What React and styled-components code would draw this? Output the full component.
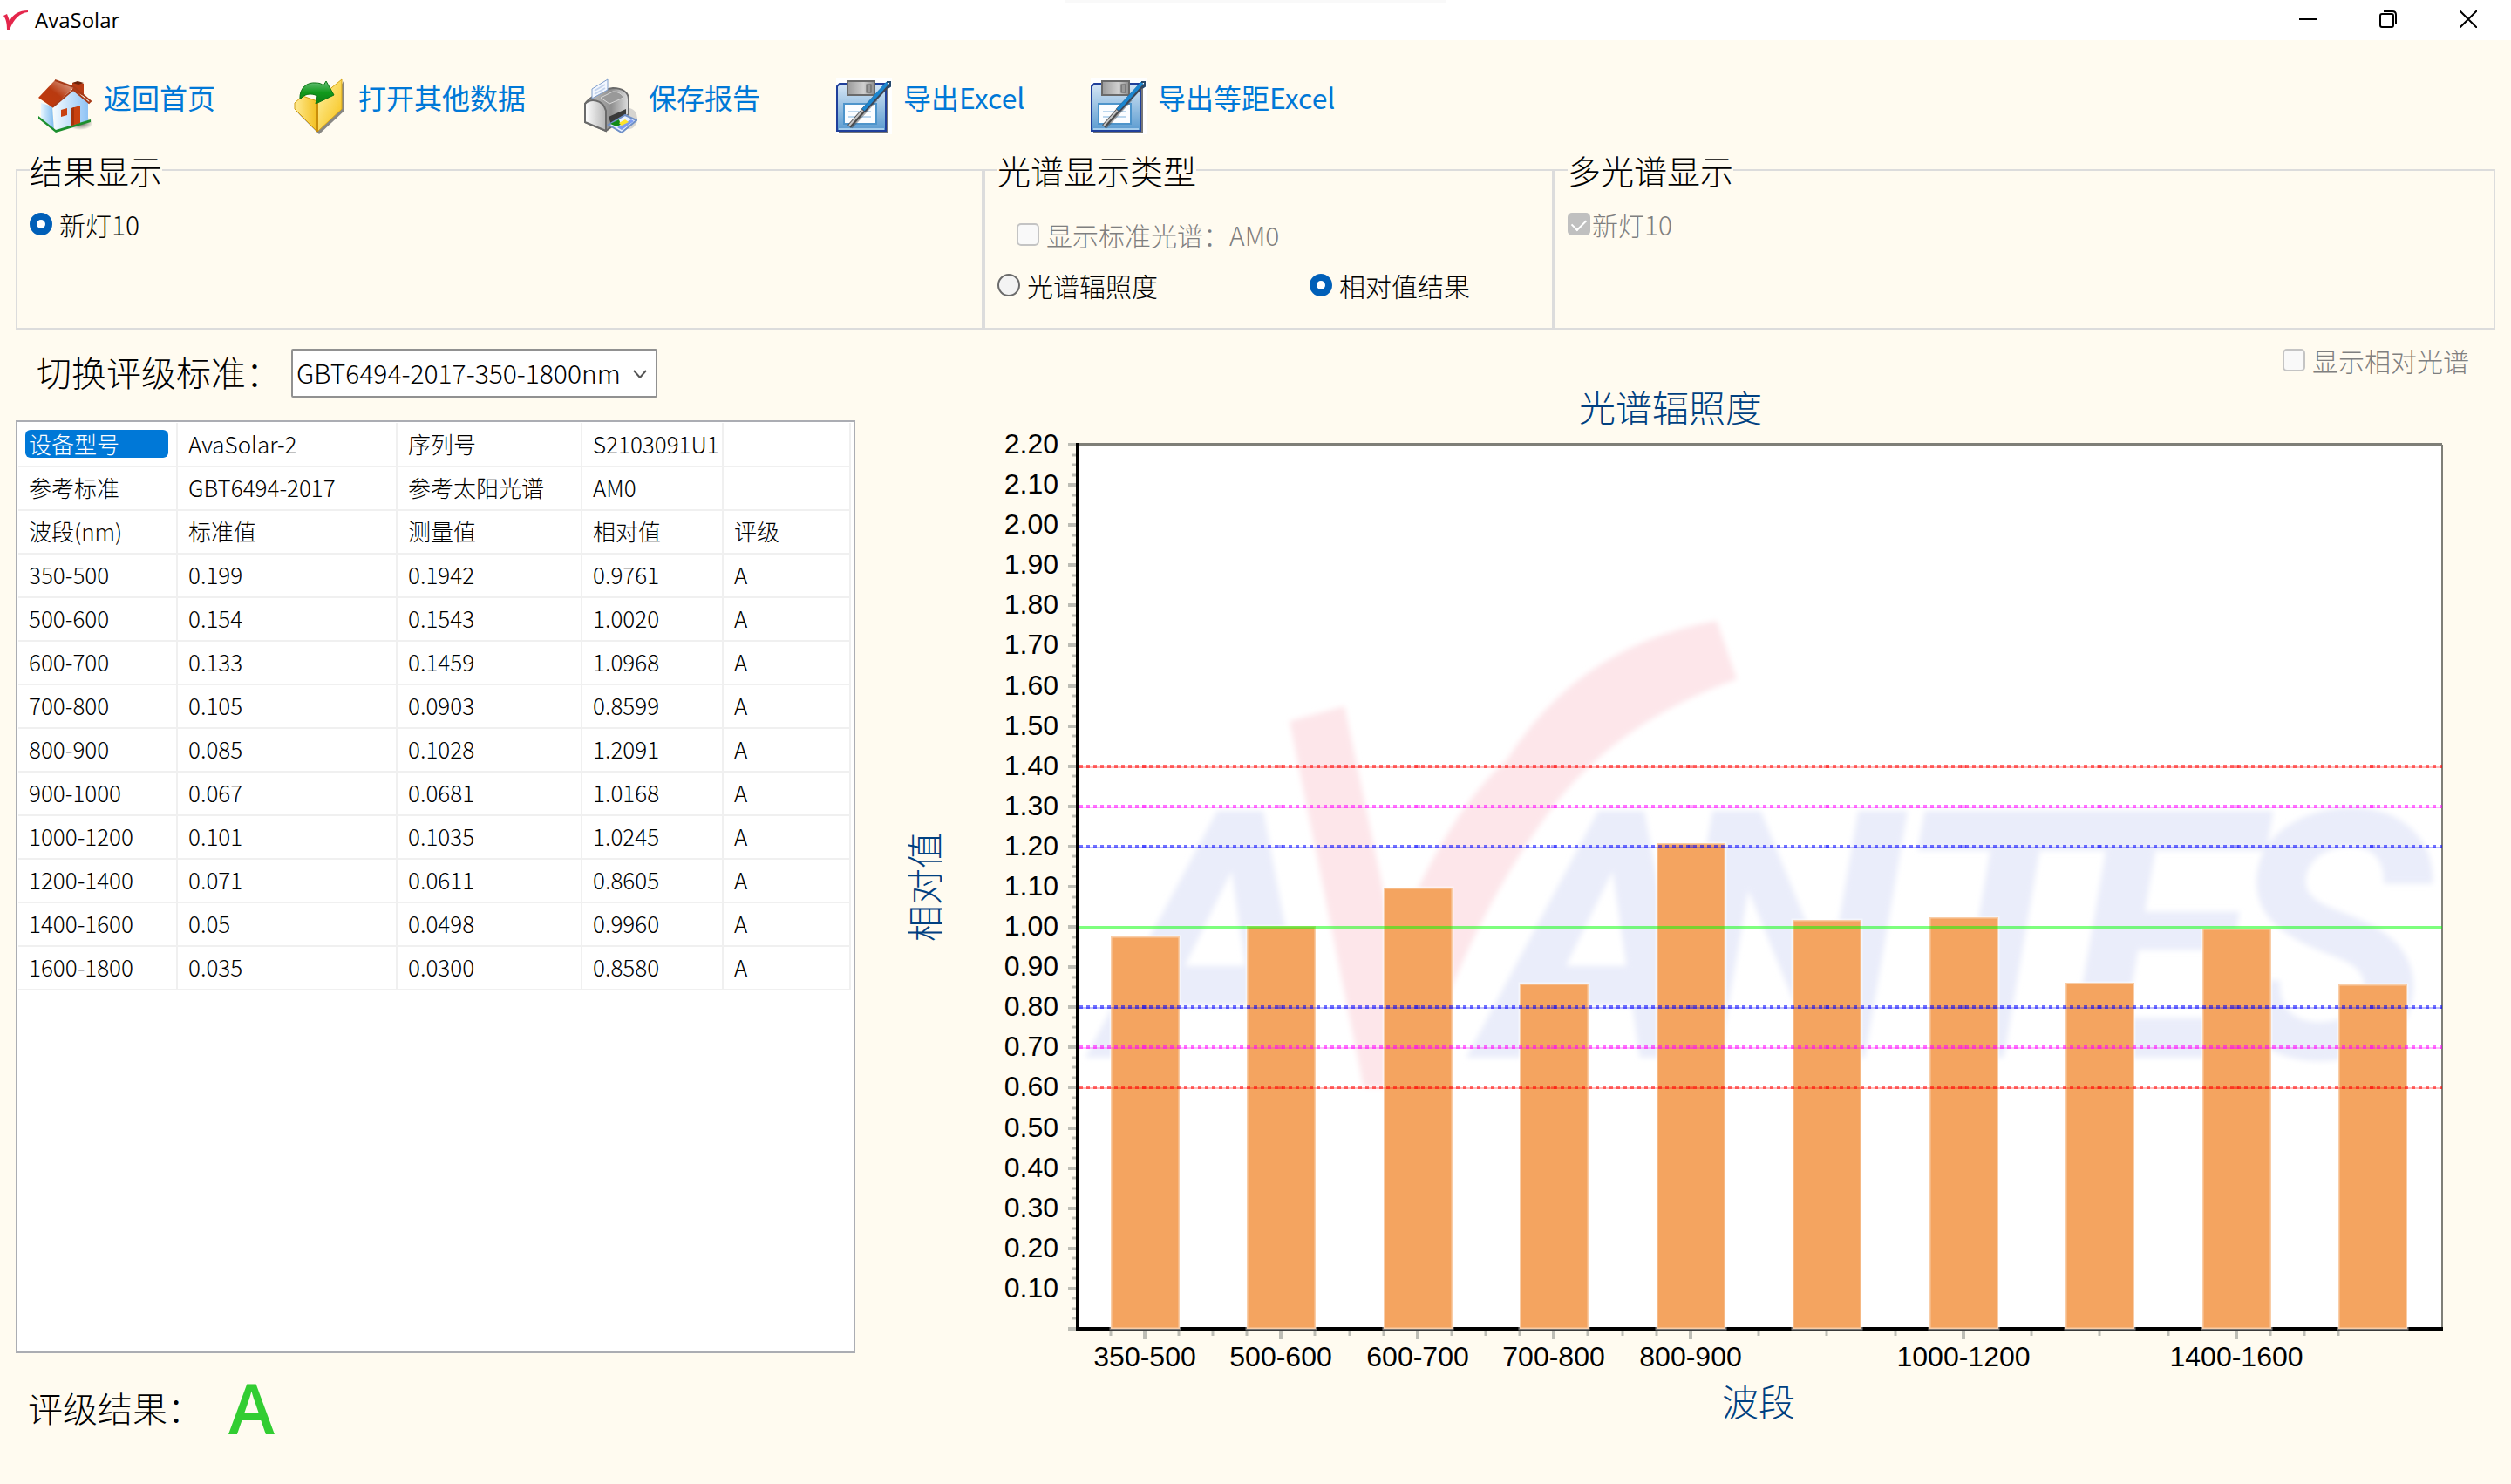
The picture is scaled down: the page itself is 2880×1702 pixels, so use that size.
import React, { useState } from "react";
import styled, { createGlobalStyle } from "styled-components";

const GlobalStyle = createGlobalStyle`
  * {
    box-sizing: border-box;
  }
  body {
    margin: 0;
    background-color: #fffbf0;
    color: #000;
    font-family: "Noto Sans CJK SC", "Open Sans", sans-serif;
    font-weight: 300;
  }
  button,
  select,
  input {
    font: inherit;
    color: inherit;
  }
`;

const Window = styled.div`
  min-height: 100vh;
  display: flex;
  flex-direction: column;
`;

const TitleBar = styled.header`
  display: grid;
  grid-template-columns: 1fr 438px 1fr;
  height: 46px;
  background-color: #fff;
`;

const AppName = styled.h1`
  display: flex;
  align-items: center;
  gap: 8px;
  margin: 0;
  padding-left: 4px;
  font-family: "Open Sans", sans-serif;
  font-size: 24px;
  font-weight: 400;
  line-height: 46px;
`;

const SnapHandle = styled.div`
  height: 4px;
  background-color: #f9f9f9;
`;

const WindowButtons = styled.div`
  display: flex;
  justify-content: flex-end;
  padding-right: 3px;
`;

const WindowButton = styled.button`
  display: flex;
  justify-content: center;
  align-items: center;
  width: 92px;
  height: 44px;
  padding: 0;
  border: none;
  background: none;
`;

const Toolbar = styled.nav`
  display: grid;
  grid-template-columns: 292px 333px 292px 292px auto;
  justify-content: start;
  height: 130px;
  padding: 44px 42px 0;
`;

const ToolButton = styled.button`
  display: flex;
  align-items: flex-start;
  gap: 13px;
  height: 64px;
  padding: 0;
  border: none;
  background: none;
  color: #0078d7;
  font-size: 32px;
  font-weight: 400;
  line-height: 42px;
  white-space: nowrap;
  cursor: pointer;
`;

const Groups = styled.div`
  display: grid;
  grid-template-columns: 1110fr 654fr 1080fr;
  padding: 0 18px;
`;

const Group = styled.fieldset`
  min-width: 0;
  min-height: 202px;
  margin: 0;
  padding: ${({ $top }) => $top}px 14px 0;
  border: 2px solid #dcdcdc;
`;

const Legend = styled.legend`
  padding: 0;
  font-size: 38px;
  line-height: 38px;
`;

const Option = styled.label`
  display: flex;
  align-items: center;
  gap: ${({ $gap }) => $gap || 8}px;
  padding-left: ${({ $indent }) => $indent || 0}px;
  font-size: 30px;
  line-height: 34px;
  white-space: nowrap;
  color: ${({ $muted }) => ($muted ? "#7f7f7f" : "#000")};
`;

const OptionPair = styled.div`
  display: grid;
  grid-template-columns: 358px auto;
  justify-content: start;
  margin-top: 24px;
`;

const Radio = styled.input`
  appearance: none;
  flex: none;
  width: 26px;
  height: 26px;
  margin: 0;
  border: 2px solid #6b6b6b;
  border-radius: 50%;
  background-color: #f3f3f3;
  &:checked {
    border: 8px solid #005fb8;
    background-color: #fff;
  }
`;

const Checkbox = styled.input`
  appearance: none;
  flex: none;
  display: flex;
  justify-content: center;
  width: 26px;
  height: 26px;
  margin: 0;
  border: 2px solid #c4c4c4;
  border-radius: 5px;
  background-color: #f9f9f9;
  &:checked {
    background-color: #c0c0c0;
    border-color: #c0c0c0;
  }
  &:checked::after {
    content: "";
    width: 8px;
    height: 14px;
    margin-top: 2px;
    border: solid #fff;
    border-width: 0 2px 2px 0;
    transform: rotate(45deg);
  }
`;

const Main = styled.main`
  flex: 1;
  display: grid;
  grid-template-columns: 963fr 1881fr;
  padding: 0 18px;
`;

const Column = styled.section`
  display: flex;
  flex-direction: column;
  min-width: 0;
`;

const StandardRow = styled.div`
  display: flex;
  align-items: center;
  height: 104px;
  padding: 0 24px 4px;
`;

const StandardLabel = styled.label`
  padding-bottom: 4px;
  font-size: 40px;
  line-height: 56px;
  white-space: nowrap;
`;

const SelectBox = styled.div`
  display: flex;
  align-items: center;
  width: 420px;
  height: 56px;
  margin-left: 12px;
  border: 2px solid #919191;
  border-radius: 2px;
  background-color: #fff;
`;

const Select = styled.select`
  appearance: none;
  width: 100%;
  height: 100%;
  margin-right: -26px;
  padding: 0 26px 2px 4px;
  border: none;
  background: none;
  font-size: 30px;
`;

const TableBox = styled.div`
  flex: 1;
  padding: 1px;
  border: 2px solid #abadb3;
  background-color: #fff;
`;

const Table = styled.table`
  width: 954px;
  max-width: 100%;
  table-layout: fixed;
  border-collapse: collapse;
`;

const Cell = styled.td`
  height: 50px;
  padding: 0 0 2px 12px;
  border: solid #f0f0f0;
  border-width: 0 2px 2px 0;
  font-size: 26px;
  line-height: 32px;
  white-space: nowrap;
`;

const Selected = styled.span`
  display: block;
  margin: 0 9px 0 -4px;
  padding-left: 4px;
  border-radius: 6px;
  background-color: #0078d7;
  color: #fff;
`;

const ResultRow = styled.div`
  display: flex;
  align-items: center;
  height: 150px;
  padding: 0 14px 26px;
  font-size: 40px;
`;

const Grade = styled.output`
  margin-left: 30px;
  font-family: "Open Sans", sans-serif;
  font-size: 80px;
  font-weight: 600;
  line-height: 100px;
  color: #32cd32;
`;

const ChartOptions = styled.div`
  display: flex;
  justify-content: flex-end;
  align-items: flex-start;
  height: 46px;
  padding: 18px 30px 0 0;
`;

const ChartSvg = styled.svg`
  display: block;
  width: 100%;
  height: auto;
`;

const ChartTitle = styled.text`
  fill: #004080;
  font-size: 42px;
  text-anchor: middle;
`;

const AxisLabel = styled.text`
  font-family: "Liberation Sans", Arial, sans-serif;
  font-size: 32px;
  font-weight: 400;
  text-anchor: ${({ $anchor }) => $anchor};
`;

const Watermark = styled.text`
  fill: #eaedfa;
  font-family: Roboto, sans-serif;
  font-size: 398px;
  font-style: italic;
  font-weight: 700;
`;

const LogoMark = () => (
  <svg width="28" height="24" viewBox="0 0 28 24" aria-hidden="true">
    <path
      d="M0 7 L4 5 L7 13 C11 5 18 1 28 1 L28 3 C19 4 12 10 7 23 L4 23 C4 16 3 11 0 7 Z"
      fill="#e4264b"
    />
  </svg>
);

const HomeIcon = () => (
  <svg width="64" height="64" viewBox="0 0 64 64" aria-hidden="true">
    <defs>
      <linearGradient id="homeRoof" x1="0" y1="1" x2="1" y2="0">
        <stop offset="0" stopColor="#c23a0c" />
        <stop offset="0.5" stopColor="#b93a10" />
        <stop offset="1" stopColor="#e0b3a0" />
      </linearGradient>
      <linearGradient id="homeSide">
        <stop offset="0" stopColor="#e6f6ff" />
        <stop offset="1" stopColor="#7fbbee" />
      </linearGradient>
      <linearGradient id="homeFront">
        <stop offset="0" stopColor="#f4fbff" />
        <stop offset="1" stopColor="#8fc3f5" />
      </linearGradient>
      <radialGradient id="homeShade">
        <stop offset="0" stopColor="#333" stopOpacity="0.8" />
        <stop offset="1" stopColor="#333" stopOpacity="0" />
      </radialGradient>
    </defs>
    <ellipse cx="50" cy="51" rx="15" ry="8" fill="url(#homeShade)" />
    <path d="M41 5 L47 4 L54 6 V20 L41 14 Z" fill="#b83c14" />
    <path d="M41 5 L47 3 L54 5 L48 7 Z" fill="#6b2209" />
    <path d="M5 28 L18 32 L20 60 L5 45 Z" fill="url(#homeSide)" />
    <path d="M19 31 L42 13 L59 27 V49 L21 60 Z" fill="url(#homeFront)" />
    <path d="M2 43 L22 59 L62 47 V50 L22 62 L2 46 Z" fill="#1c8f2e" />
    <path d="M2 22 L21 2 L43 10 L18 33 Z" fill="url(#homeRoof)" />
    <path d="M21 2 L43 10 L62 26 L60 28 L42 13 L18 33" fill="none" stroke="#a63a17" strokeWidth="2" />
    <path d="M28 36 L35 34 V42 L28 44 Z" fill="#c8410f" />
    <path d="M40 34 L50 31 V51 L40 54 Z" fill="#c8410f" />
    <path d="M40 34 L43 33 V53 L40 54 Z" fill="#a8330a" />
  </svg>
);

const OpenIcon = () => (
  <svg width="64" height="64" viewBox="0 0 64 64" aria-hidden="true">
    <defs>
      <linearGradient id="folderLeft" x1="0" y1="0" x2="1" y2="0">
        <stop offset="0" stopColor="#ffeb94" />
        <stop offset="1" stopColor="#f3bf1d" />
      </linearGradient>
      <linearGradient id="folderRight" x1="0" y1="0" x2="1" y2="1">
        <stop offset="0" stopColor="#fff3a8" />
        <stop offset="1" stopColor="#f6bf10" />
      </linearGradient>
      <linearGradient id="folderArrow" x1="0" y1="0" x2="0" y2="1">
        <stop offset="0" stopColor="#6cc07a" />
        <stop offset="0.5" stopColor="#119a1c" />
        <stop offset="1" stopColor="#0d7d14" />
      </linearGradient>
    </defs>
    <path d="M60 3 L61 37 L32 64 L6 38 L30 58 Z" fill="#555" opacity="0.7" />
    <path d="M30 24 L58 1 V35 L30 61 Z" fill="url(#folderRight)" stroke="#d7a514" strokeWidth="1" />
    <path d="M4 28 L13 20 L30 26 V61 L4 35 Z" fill="url(#folderLeft)" stroke="#cf9c10" strokeWidth="1" />
    <path d="M30 26 V61" stroke="#c98e0a" strokeWidth="2" />
    <path
      d="M10 24 C9 10 19 4 28 5 C32 5 35 6 37 8 L40 3 L49 19 L28 29 L30 20 C22 16 15 18 10 24 Z"
      fill="url(#folderArrow)"
      stroke="#0c7415"
      strokeWidth="1"
    />
  </svg>
);

const PrinterIcon = () => (
  <svg width="64" height="64" viewBox="0 0 64 64" aria-hidden="true">
    <defs>
      <linearGradient id="printerFront">
        <stop offset="0" stopColor="#fff" />
        <stop offset="1" stopColor="#b5b5b5" />
      </linearGradient>
      <linearGradient id="printerTop">
        <stop offset="0" stopColor="#c9c9c9" />
        <stop offset="0.6" stopColor="#8f8f8f" />
        <stop offset="1" stopColor="#dedede" />
      </linearGradient>
    </defs>
    <ellipse cx="54" cy="46" rx="10" ry="12" fill="#bbb" opacity="0.6" />
    <path
      d="M4 29 C8 22 26 12 36 11 C47 11 54 16 54 24 V41 L28 60 L4 50 Z"
      fill="url(#printerTop)"
      stroke="#6a6a6a"
      strokeWidth="2"
    />
    <path d="M22 22 L36 15 C42 15 47 18 48 22 L32 29 Z" fill="#999" stroke="#d8d8d8" strokeWidth="1" />
    <path d="M12 23 V12 L30 1 V13 Z" fill="#f2f7ff" stroke="#7e9dcc" strokeWidth="1" />
    <path d="M15 14 L27 7 M15 18 L27 11" stroke="#c3d3ec" strokeWidth="2" />
    <path
      d="M4 29 C10 23 24 23 28 37 V60 L4 50 Z"
      fill="url(#printerFront)"
      stroke="#6a6a6a"
      strokeWidth="2"
    />
    <path d="M31 44 L51 35 V42 L34 53 Z" fill="#3a3a3a" />
    <path d="M31 53 L50 42 L63 48 L46 62 Z" fill="#e8f0ff" stroke="#6f90c8" strokeWidth="2" />
    <path d="M33 52 L43 47 L45 53 L40 55 Z" fill="#108a18" />
    <path d="M41 56 L57 47 L60 49 L46 59 Z" fill="#7d9cf2" />
    <path d="M43 51 L50 47 L54 50 L46 54 Z" fill="#ffe52e" />
  </svg>
);

const ExportIcon = () => (
  <svg width="64" height="64" viewBox="0 0 64 64" aria-hidden="true">
    <defs>
      <linearGradient id="diskBody" x1="0" y1="0" x2="0" y2="1">
        <stop offset="0" stopColor="#d6e6f5" />
        <stop offset="1" stopColor="#5a9bd0" />
      </linearGradient>
      <linearGradient id="diskShutter">
        <stop offset="0" stopColor="#9a9a9a" />
        <stop offset="0.6" stopColor="#cfcfcf" />
        <stop offset="1" stopColor="#8d8d8d" />
      </linearGradient>
    </defs>
    <rect width="64" height="64" fill="#fff" />
    <path d="M3 60 H58 V10 H60 V63 H3 Z" fill="#777" />
    <path d="M1 9 L4 6 H57 V60 H1 Z" fill="url(#diskBody)" stroke="#1f3f9a" strokeWidth="2" />
    <path d="M3 58 H55" stroke="#a5cdec" strokeWidth="2" />
    <rect x="13" y="3" width="31" height="16" fill="url(#diskShutter)" stroke="#6a6a6a" strokeWidth="2" />
    <rect x="35" y="7" width="5" height="9" fill="#9a9a9a" stroke="#5c5c5c" strokeWidth="1" />
    <rect x="9" y="29" width="37" height="23" fill="#fbfdff" stroke="#4d94cb" strokeWidth="2" />
    <path d="M14 38 H40 M14 44 H40" stroke="#bcd7ee" strokeWidth="2" />
    <path d="M17 56 L46 24" stroke="#555" strokeWidth="4" opacity="0.5" />
    <path d="M15 55 L31 37" stroke="#4a4a4a" strokeWidth="5" />
    <path d="M15 54 L31 36" stroke="#c5c5c5" strokeWidth="2" />
    <path d="M31 37 L60 6" stroke="#3d4656" strokeWidth="6" />
    <path d="M31 36 L59 5" stroke="#1c86cf" strokeWidth="4" />
    <path d="M58 4 L62 4 V9 L59 11" fill="none" stroke="#27496b" strokeWidth="2" />
  </svg>
);

const tools = [
  { label: "返回首页", Icon: HomeIcon },
  { label: "打开其他数据", Icon: OpenIcon },
  { label: "保存报告", Icon: PrinterIcon },
  { label: "导出Excel", Icon: ExportIcon },
  { label: "导出等距Excel", Icon: ExportIcon },
];

const columnWidths = [182, 252, 212, 162, 146];

const bands = [
  { range: "350-500", standard: "0.199", measured: "0.1942", relative: "0.9761" },
  { range: "500-600", standard: "0.154", measured: "0.1543", relative: "1.0020" },
  { range: "600-700", standard: "0.133", measured: "0.1459", relative: "1.0968" },
  { range: "700-800", standard: "0.105", measured: "0.0903", relative: "0.8599" },
  { range: "800-900", standard: "0.085", measured: "0.1028", relative: "1.2091" },
  { range: "900-1000", standard: "0.067", measured: "0.0681", relative: "1.0168" },
  { range: "1000-1200", standard: "0.101", measured: "0.1035", relative: "1.0245" },
  { range: "1200-1400", standard: "0.071", measured: "0.0611", relative: "0.8605" },
  { range: "1400-1600", standard: "0.05", measured: "0.0498", relative: "0.9960" },
  { range: "1600-1800", standard: "0.035", measured: "0.0300", relative: "0.8580" },
];

const rows = [
  ["设备型号", "AvaSolar-2", "序列号", "S2103091U1", ""],
  ["参考标准", "GBT6494-2017", "参考太阳光谱", "AM0", ""],
  ["波段(nm)", "标准值", "测量值", "相对值", "评级"],
  ...bands.map((b) => [b.range, b.standard, b.measured, b.relative, "A"]),
];

const limits = [
  { value: 1.4, color: "#f00" },
  { value: 1.3, color: "#f0f" },
  { value: 1.2, color: "#00f" },
  { value: 0.8, color: "#00f" },
  { value: 0.7, color: "#f0f" },
  { value: 0.6, color: "#f00" },
];

const plot = { left: 255, right: 1820, top: 70, bottom: 1084 };
const step = (plot.right - plot.left) / bands.length;
const labelled = [0, 1, 2, 3, 4, 6, 8];

const xOf = (index) => Math.floor(plot.left + step * (index + 0.5)) - 1;
const yOf = (value) => Math.round(plot.bottom - (value / 2.2) * (plot.bottom - plot.top));

// quarter steps between two labelled bands, plus a few past both ends
const minorX = [-0.25];
labelled.forEach((band, i) => {
  const gap = i < labelled.length - 1 ? labelled[i + 1] - band : 1;
  [0.25, 0.5, 0.75].forEach((part) => minorX.push(band + gap * part));
});

const Chart = () => (
  <ChartSvg viewBox="0 -16 1881 1216" role="img" aria-label="光谱辐照度">
    <defs>
      <filter id="soft">
        <feGaussianBlur stdDeviation="3" />
      </filter>
    </defs>
    <ChartTitle x="935" y="44">
      光谱辐照度
    </ChartTitle>
    <ChartTitle transform="translate(96 577) rotate(-90)">相对值</ChartTitle>

    <rect
      x={plot.left}
      y={plot.top}
      width={plot.right - plot.left}
      height={plot.bottom - plot.top}
      fill="#fff"
    />
    <g filter="url(#soft)">
      <Watermark x="284 721 930 1190 1389 1570" y="773">
        AANTES
      </Watermark>
      <path
        d="M498 387 L561 370 L618 640 Q680 490 747 432 Q830 300 988 272 L1011 339 Q880 385 805 479 Q735 570 687 685 Q660 750 643 807 L583 807 Z"
        fill="#fde6ea"
      />
    </g>
    <path d={`M${plot.left} ${plot.top} H${plot.right}`} stroke="#7f7f78" strokeWidth="4" />
    <path d={`M${plot.right} ${plot.top} V${plot.bottom}`} stroke="#7f7f78" strokeWidth="2" />
    <path
      d={`M${plot.left} ${plot.top - 2} V${plot.bottom} H${plot.right + 1}`}
      fill="none"
      stroke="#000"
      strokeWidth="4"
    />

    {bands.map((band, i) => {
      const top = yOf(Number(band.relative));
      return (
        <rect
          key={band.range}
          x={xOf(i) - 39}
          y={top}
          width="79"
          height={plot.bottom - top}
          fill="#f4a460"
          stroke="#fff"
          strokeOpacity="0.45"
          strokeWidth="3"
        />
      );
    })}

    {limits.map(({ value, color }) => (
      <g key={value} stroke={color}>
        <path d={`M${plot.left + 2} ${yOf(value)} H${plot.right}`} strokeWidth="4" strokeDasharray="4 4" opacity="0.55" />
        <path d={`M${plot.left + 2} ${yOf(value) + 1} H${plot.right}`} strokeWidth="2" opacity="0.25" />
        {bands.map((band, i) => (
          <path key={band.range} d={`M${xOf(i) - 3} ${yOf(value)} h6`} strokeWidth="4" opacity="0.3" />
        ))}
      </g>
    ))}
    <path d={`M${plot.left + 2} ${yOf(1) + 1} H${plot.right}`} stroke="#0f0" strokeWidth="4" opacity="0.5" />

    {Array.from({ length: 89 }, (_, i) => {
      const major = i % 4 === 0;
      return (
        <path
          key={i}
          d={`M${plot.left - 2} ${yOf(i * 0.025)} h${major ? -9 : -5}`}
          stroke="#bdbdb5"
          strokeWidth={major ? 4 : 3}
        />
      );
    })}
    {Array.from({ length: 22 }, (_, i) => (i + 1) / 10).map((value) => (
      <AxisLabel key={value} $anchor="end" x="233" y={yOf(value) + 10}>
        {value.toFixed(2)}
      </AxisLabel>
    ))}

    {minorX.map((pos) => (
      <path key={pos} d={`M${xOf(pos)} ${plot.bottom + 2} v6`} stroke="#bdbdb5" strokeWidth="3" />
    ))}
    {labelled.map((i) => (
      <g key={i}>
        <path d={`M${xOf(i)} ${plot.bottom + 2} v10`} stroke="#bdbdb5" strokeWidth="4" />
        <AxisLabel $anchor="middle" x={xOf(i)} y={plot.bottom + 43}>
          {bands[i].range}
        </AxisLabel>
      </g>
    ))}
    <ChartTitle x="1036" y="1184">
      波段
    </ChartTitle>
  </ChartSvg>
);

export default function App() {
  const [view, setView] = useState("relative");

  return (
    <>
      <GlobalStyle />
      <Window>
        <TitleBar>
          <AppName>
            <LogoMark />
            AvaSolar
          </AppName>
          <SnapHandle />
          <WindowButtons>
            <WindowButton aria-label="最小化">
              <svg width="20" height="20" viewBox="0 0 20 20" fill="none" stroke="#000" strokeWidth="2">
                <path d="M0 10 H20" />
              </svg>
            </WindowButton>
            <WindowButton aria-label="还原">
              <svg width="20" height="20" viewBox="0 0 20 20" fill="none" stroke="#000" strokeWidth="2">
                <rect x="1" y="4" width="15" height="15" rx="2" />
                <path d="M5 1 H15 Q19 1 19 5 V15" />
              </svg>
            </WindowButton>
            <WindowButton aria-label="关闭">
              <svg width="20" height="20" viewBox="0 0 20 20" fill="none" stroke="#000" strokeWidth="2">
                <path d="M0 0 L20 20 M20 0 L0 20" />
              </svg>
            </WindowButton>
          </WindowButtons>
        </TitleBar>

        <Toolbar>
          {tools.map(({ label, Icon }) => (
            <ToolButton key={label}>
              <Icon />
              {label}
            </ToolButton>
          ))}
        </Toolbar>

        <Groups>
          <Group $top={26}>
            <Legend>结果显示</Legend>
            <Option>
              <Radio type="radio" name="result" defaultChecked />
              新灯10
            </Option>
          </Group>
          <Group $top={38}>
            <Legend>光谱显示类型</Legend>
            <Option $indent={22} $muted>
              <Checkbox type="checkbox" disabled />
              显示标准光谱：AM0
            </Option>
            <OptionPair>
              <Option>
                <Radio
                  type="radio"
                  name="view"
                  checked={view === "irradiance"}
                  onChange={() => setView("irradiance")}
                />
                光谱辐照度
              </Option>
              <Option>
                <Radio
                  type="radio"
                  name="view"
                  checked={view === "relative"}
                  onChange={() => setView("relative")}
                />
                相对值结果
              </Option>
            </OptionPair>
          </Group>
          <Group $top={26}>
            <Legend>多光谱显示</Legend>
            <Option $gap={2} $muted>
              <Checkbox type="checkbox" defaultChecked disabled />
              新灯10
            </Option>
          </Group>
        </Groups>

        <Main>
          <Column>
            <StandardRow>
              <StandardLabel htmlFor="standard">切换评级标准：</StandardLabel>
              <SelectBox>
                <Select id="standard">
                  <option>GBT6494-2017-350-1800nm</option>
                </Select>
                <svg width="16" height="12" viewBox="0 0 16 12" fill="none" stroke="#555" strokeWidth="2" aria-hidden="true">
                  <path d="M1 3 L8 11 L15 3" />
                </svg>
              </SelectBox>
            </StandardRow>
            <TableBox>
              <Table>
                <colgroup>
                  {columnWidths.map((width, i) => (
                    <col key={i} width={width} />
                  ))}
                </colgroup>
                <tbody>
                  {rows.map((row, r) => (
                    <tr key={row[0]}>
                      {row.map((text, c) => (
                        <Cell key={c}>{r === 0 && c === 0 ? <Selected>{text}</Selected> : text}</Cell>
                      ))}
                    </tr>
                  ))}
                </tbody>
              </Table>
            </TableBox>
            <ResultRow>
              评级结果：
              <Grade>A</Grade>
            </ResultRow>
          </Column>

          <Column>
            <ChartOptions>
              <Option $muted>
                <Checkbox type="checkbox" disabled />
                显示相对光谱
              </Option>
            </ChartOptions>
            <Chart />
          </Column>
        </Main>
      </Window>
    </>
  );
}
